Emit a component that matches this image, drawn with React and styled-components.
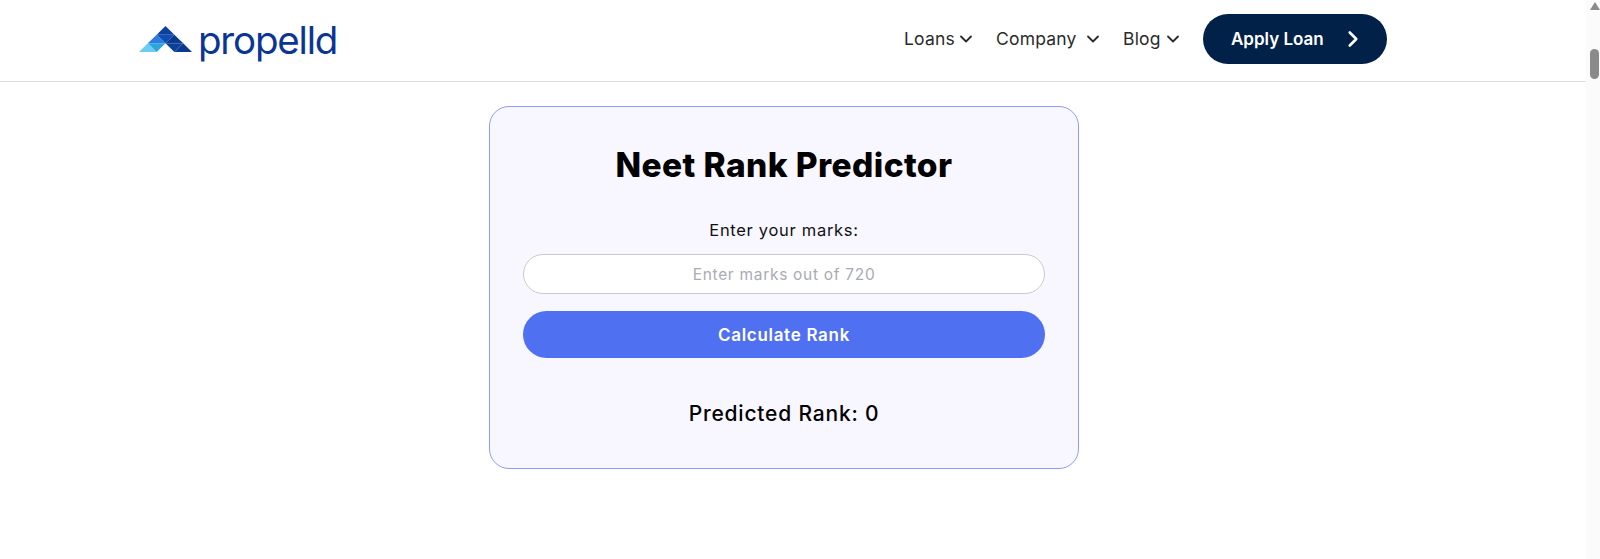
import React from 'react';
import styled, { createGlobalStyle } from 'styled-components';
import { ChevronDown, ChevronRight } from 'lucide-react';

const Global = createGlobalStyle`
  html, body { margin: 0; padding: 0; height: 100%; overflow: hidden; background: #fff; }
  #root { height: 100%; }
  * { box-sizing: border-box; }
`;

const Shell = styled.div`
  display: flex;
  height: 559px;
  width: 1600px;
`;
const Page = styled.div`
  width: 1586px;
  display: flex;
  flex-direction: column;
`;
const Header = styled.header`
  height: 82px;
  border-bottom: 1px solid #dedede;
  display: flex;
  align-items: center;
  justify-content: space-between;
  padding: 0 199px 4px 139px;
  flex-shrink: 0;
`;
const LogoLink = styled.a`
  display: flex;
  align-items: center;
  gap: 6px;
  text-decoration: none;
`;
const Wordmark = styled.span`
  font-family: "Inter", sans-serif;
  font-weight: 400;
  font-size: 38.5px;
  line-height: 44px;
  letter-spacing: -1.2px;
  color: #0b3594;
  position: relative;
  top: 1px;
`;
const Nav = styled.nav`
  display: flex;
  align-items: center;
`;
const NavItem = styled.a`
  width: ${p => p.$w}px;
  padding-right: 20px;
  display: flex;
  align-items: center;
  justify-content: space-between;
  font-family: "Inter", sans-serif;
  font-size: 17.5px;
  letter-spacing: 0.2px;
  color: #2b2b2b;
`;
const ApplyButton = styled.button`
  width: 184px;
  height: 50px;
  border: 0;
  border-radius: 25px;
  background: #012148;
  color: #fff;
  display: flex;
  align-items: center;
  justify-content: space-between;
  padding: 0 21px 0 28px;
  font-family: "Inter", sans-serif;
  font-size: 17px;
  font-weight: 600;
`;
const Main = styled.main`
  width: 1568px;
  display: flex;
  justify-content: center;
  padding-top: 24px;
`;
const Card = styled.section`
  width: 590px;
  height: 363px;
  border: 1px solid #8d9df5;
  border-radius: 20px;
  background: #f8f7ff;
  padding: 0 33px;
  display: flex;
  flex-direction: column;
  align-items: stretch;
  text-align: center;
`;
const Title = styled.h1`
  margin: 36px 0 0;
  font-family: "Inter", sans-serif;
  font-size: 33.5px;
  line-height: 44px;
  font-weight: 800;
  letter-spacing: 0.4px;
  color: #000;
`;
const Label = styled.label`
  margin-top: 32px;
  font-family: "Inter", sans-serif;
  font-size: 16.5px;
  line-height: 22px;
  letter-spacing: 0.7px;
  color: #111;
`;
const MarksInput = styled.input`
  margin-top: 13px;
  height: 40px;
  border: 1px solid #c9c9d0;
  border-radius: 20px;
  background: #fff;
  text-align: center;
  font-family: "Inter", sans-serif;
  font-size: 15.5px;
  letter-spacing: 0.7px;
  outline: none;
  &::placeholder { color: #a9abb5; opacity: 1; }
`;
const CalcButton = styled.button`
  margin-top: 17px;
  height: 47px;
  border: 0;
  border-radius: 24px;
  background: #5070f2;
  color: #fff;
  font-family: "Inter", sans-serif;
  font-size: 17px;
  letter-spacing: 0.7px;
  font-weight: 600;
`;
const Result = styled.p`
  margin: 42px 0 0;
  font-family: "Inter", sans-serif;
  font-size: 21px;
  line-height: 28px;
  letter-spacing: 0.8px;
  font-weight: 500;
  color: #000;
`;
const Scrollbar = styled.div`
  width: 14px;
  height: 100%;
  background: #fbfbfb;
  display: flex;
  flex-direction: column;
  align-items: center;
  padding: 2px 0 0 3px;
`;
const Arrow = styled.div`
  width: 0;
  height: 0;
  border-left: 5.5px solid transparent;
  border-right: 5.5px solid transparent;
  border-bottom: 8px solid #8a8a8a;
`;
const Thumb = styled.div`
  width: 9px;
  height: 30px;
  margin-top: 39px;
  border-radius: 5px;
  background: #8a8a8a;
`;

const Logo = () => (
  <svg width="53" height="26" viewBox="0 0 53 26" aria-hidden="true">
    <polygon points="26.5,0 17.67,8.67 35.33,8.67" fill="#0c409f" />
    <polygon points="17.67,8.67 8.83,17.33 26.5,17.33" fill="#2f7ce0" />
    <polygon points="17.67,8.67 35.33,8.67 26.5,17.33" fill="#0d4db4" />
    <polygon points="35.33,8.67 26.5,17.33 44.17,17.33" fill="#0a3a8e" />
    <polygon points="8.83,17.33 0,26 17.67,26" fill="#6fcbf1" />
    <polygon points="8.83,17.33 26.5,17.33 17.67,26" fill="#2ba6dd" />
    <polygon points="26.5,17.33 44.17,17.33 35.33,26" fill="#0c3f96" />
    <polygon points="44.17,17.33 35.33,26 53,26" fill="#0a3a90" />
    <path d="M26.5 17.33 L44.17 17.33 M35.33 26 L44.17 17.33" stroke="#3f6fbd" strokeWidth="0.5" fill="none" />
  </svg>
);

export default function App() {
  return (
    <Shell>
      <Global />
      <Page>
        <Header>
          <LogoLink>
            <Logo />
            <Wordmark>propelld</Wordmark>
          </LogoLink>
          <Nav>
            <NavItem $w={92}>Loans <ChevronDown size={20} strokeWidth={2.2} /></NavItem>
            <NavItem $w={127}>Company <ChevronDown size={20} strokeWidth={2.2} /></NavItem>
            <NavItem $w={80}>Blog <ChevronDown size={20} strokeWidth={2.2} /></NavItem>
            <ApplyButton>Apply Loan <ChevronRight size={26} strokeWidth={2.4} /></ApplyButton>
          </Nav>
        </Header>
        <Main>
          <Card>
            <Title>Neet Rank Predictor</Title>
            <Label htmlFor="marks">Enter your marks:</Label>
            <MarksInput id="marks" placeholder="Enter marks out of 720" />
            <CalcButton>Calculate Rank</CalcButton>
            <Result>Predicted Rank: 0</Result>
          </Card>
        </Main>
      </Page>
      <Scrollbar>
        <Arrow />
        <Thumb />
      </Scrollbar>
    </Shell>
  );
}
